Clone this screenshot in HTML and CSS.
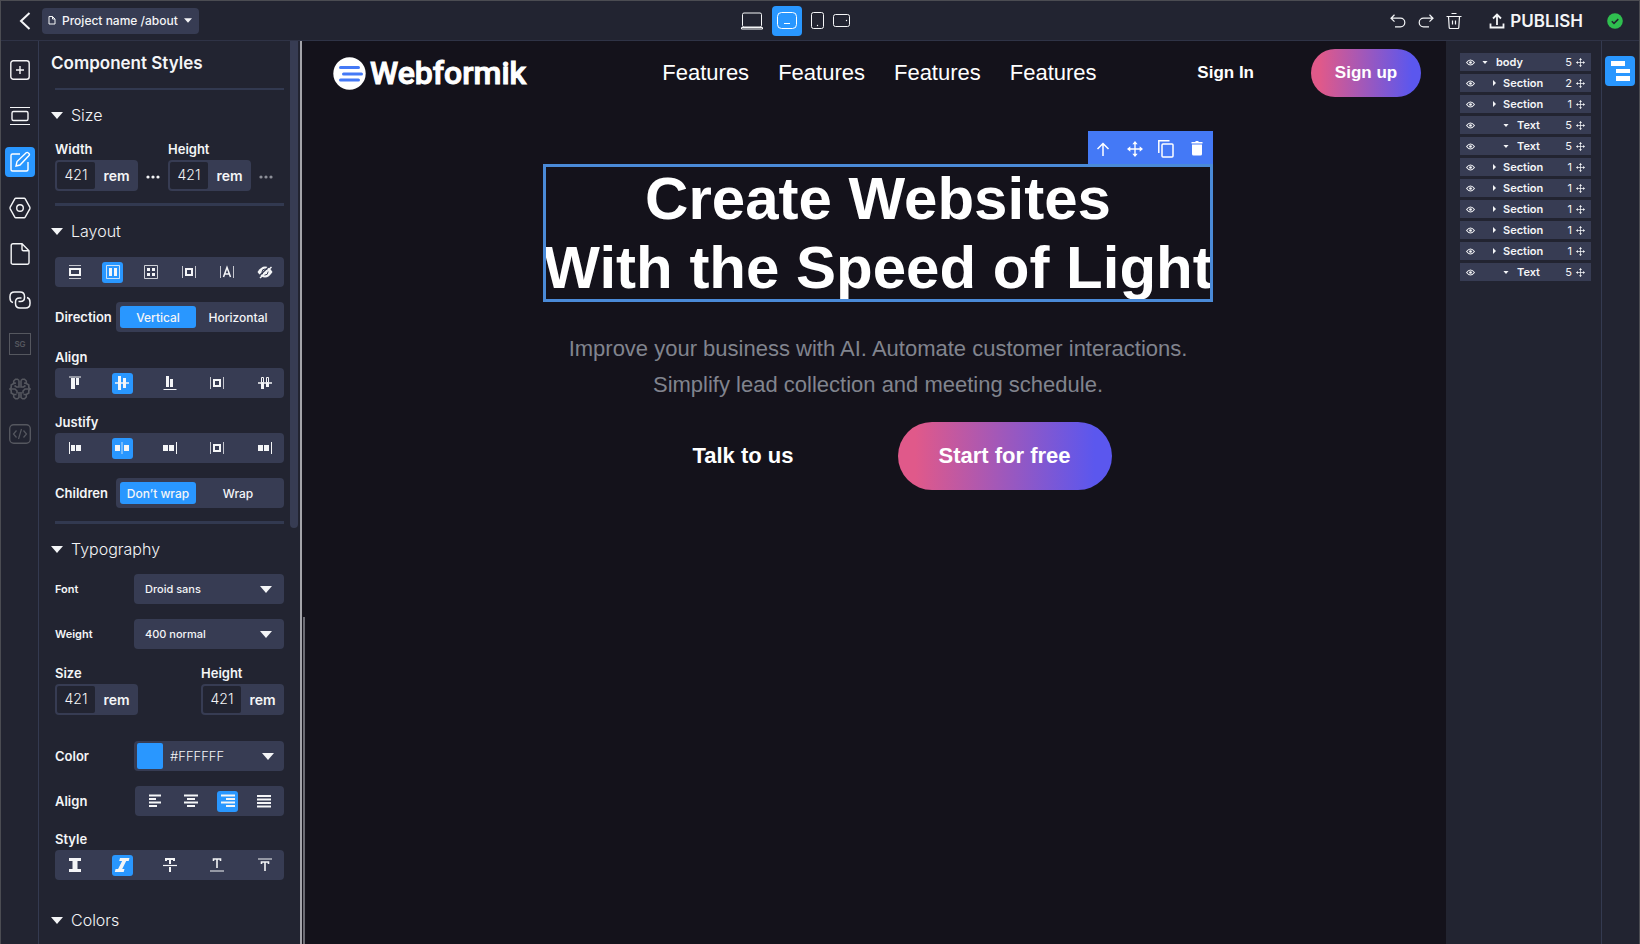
FILE: index.html
```html
<!DOCTYPE html>
<html lang="en">
<head>
<meta charset="utf-8">
<meta name="viewport" content="width=device-width, initial-scale=1">
<title>Webformik editor</title>
<link rel="stylesheet" href="styles.css">
</head>
<body>
<svg class="sprite" aria-hidden="true">
  <symbol id="caret" viewBox="0 0 12 7"><path d="M0 0h12L6 7z" fill="currentColor"/></symbol>
  <symbol id="caret-right" viewBox="0 0 4 8"><path d="M0 0l4 4-4 4z" fill="currentColor"/></symbol>
  <symbol id="eye" viewBox="0 0 8 6"><path d="M.5 3Q4-1.500 7.500 3 4 7.500.5 3z" fill="none" stroke="currentColor" stroke-width=".9"/><circle cx="4" cy="3" r="1.200" fill="currentColor"/></symbol>
  <symbol id="move" viewBox="0 0 24 24"><path d="M12 2v20M2 12h20" fill="none" stroke="currentColor" stroke-width="2"/><path d="M12 0l4 5H8zM12 24l4-5H8zM0 12l5-4v8zM24 12l-5-4v8z" fill="currentColor"/></symbol>
  <symbol id="dots" viewBox="0 0 14 4"><circle cx="2" cy="2" r="1.600" fill="currentColor"/><circle cx="7" cy="2" r="1.600" fill="currentColor"/><circle cx="12" cy="2" r="1.600" fill="currentColor"/></symbol>
  <symbol id="box-between" viewBox="0 0 16 16"><path d="M1.500 2v12M14.500 2v12" stroke="currentColor" opacity=".75"/><path d="M5 5h6v6H5z" fill="none" stroke="currentColor" stroke-width="2"/></symbol>
  <symbol id="half-brain" viewBox="0 0 11 22"><path d="M10 2.500L8.500 1.200H6.500L4.700 3v2.500L2.200 7v2.500L.8 11l1.400 1.500V15l2.500 1.500V19l1.800 1.800h2l1.500-1.300V14M10 2.500V9H7.500L5.500 7.500M1 11h5l2 2v2.500M4.700 16.500H7.500M4.700 5.500L7 5" fill="none" stroke="currentColor" stroke-width="1.600"/></symbol>
</svg>
<div class="app">
  <header class="topbar">
    <div class="topbar-left">
      <button class="plain back" aria-label="Back"><svg width="12" height="18" viewBox="0 0 12 18"><path d="M10.500 1L2 9l8.500 8" fill="none" stroke="currentColor" stroke-width="2"/></svg></button>
      <button class="project">
        <svg width="8" height="9" viewBox="0 0 8 9"><path d="M1 .5h3.500l2.500 2.500v5H1zM4.500.5V3H7" fill="none" stroke="currentColor"/></svg>
        <span>Project name /about</span>
        <svg class="caret-sm" width="8" height="5"><use href="#caret"/></svg>
      </button>
    </div>
    <div class="devices">
      <button class="plain" aria-label="Laptop"><svg width="22" height="18" viewBox="0 0 22 18"><rect x="1.500" y="1" width="19" height="14" rx="1.500" fill="none" stroke="currentColor"/><path d="M.5 15.500h21v1.500h-21z" fill="none" stroke="currentColor"/></svg></button>
      <button class="tool active" aria-label="Tablet landscape"><svg width="20" height="17" viewBox="0 0 20 17"><rect x=".5" y=".5" width="19" height="16" rx="4" fill="none" stroke="currentColor"/><path d="M7 11.500h6" stroke="currentColor"/></svg></button>
      <button class="plain" aria-label="Tablet"><svg width="13" height="17" viewBox="0 0 13 17"><rect x=".5" y=".5" width="12" height="16" rx="2" fill="none" stroke="currentColor"/><circle cx="6.500" cy="13.500" r=".7" fill="currentColor"/></svg></button>
      <button class="plain" aria-label="Phone"><svg width="17" height="13" viewBox="0 0 17 13"><rect x=".5" y=".5" width="16" height="12" rx="2" fill="none" stroke="currentColor"/><circle cx="13.500" cy="6.500" r=".7" fill="currentColor"/></svg></button>
    </div>
    <div class="topbar-right">
      <div class="history">
        <button class="plain" aria-label="Undo"><svg width="16" height="14" viewBox="0 0 16 14"><path d="M4.500.8L1 4.200l3.500 3.500M1 4.200h9.500a4.300 4.300 0 0 1 0 8.600H5" fill="none" stroke="currentColor" stroke-width="1.200"/></svg></button>
        <button class="plain" aria-label="Redo"><svg width="16" height="14" viewBox="0 0 16 14"><path d="M11.500.8L15 4.200l-3.500 3.500M15 4.200H5.500a4.300 4.300 0 0 0 0 8.600H11" fill="none" stroke="currentColor" stroke-width="1.200"/></svg></button>
        <button class="plain" aria-label="Delete"><svg width="16" height="17" viewBox="0 0 16 17"><path d="M.5 4.500h15M2.500 4.500l.7 11q.1 1 1 1h7.600q.9 0 1-1l.7-11M5.500 1.500h5M6.500 8.500v4M9.500 8.500v4" fill="none" stroke="currentColor" stroke-width="1.200"/></svg></button>
      </div>
      <button class="publish"><svg width="16" height="16" viewBox="0 0 16 16"><path d="M8 12V2M4 5.500L8 1.500l4 4M1.500 10.500V14.500h13V10.500" fill="none" stroke="currentColor" stroke-width="1.800"/></svg>PUBLISH</button>
      <svg class="status" width="16" height="16" viewBox="0 0 16 16" role="img" aria-label="Saved"><circle cx="8" cy="8" r="7.800" fill="#2fbf4f"/><path d="M4.800 8.200l2.200 2.200 4.300-4.300" fill="none" stroke="#22252f" stroke-width="1.500"/></svg>
    </div>
  </header>
  <div class="workspace">
    <nav class="rail" aria-label="Tools">
      <div class="rail-main">
        <button class="tool" aria-label="Add"><svg width="20" height="20" viewBox="0 0 20 20"><rect x=".8" y=".8" width="18.400" height="18.400" rx="2.500" fill="none" stroke="currentColor" stroke-width="1.400"/><path d="M10 6v8M6 10h8" stroke="currentColor" stroke-width="1.400"/></svg></button>
        <button class="tool" aria-label="Sections"><svg width="20" height="20" viewBox="0 0 20 20"><path d="M0 1.500h20M0 18.500h20" stroke="currentColor" stroke-width="1.200"/><rect x="2" y="5.500" width="16" height="9" rx="1.500" fill="none" stroke="currentColor" stroke-width="1.400"/></svg></button>
        <button class="tool active" aria-label="Styles"><svg width="22" height="22" viewBox="0 0 22 22"><path d="M11 3H3.500q-1.500 0-1.500 1.500v14q0 1.500 1.500 1.500h14q1.500 0 1.500-1.500V11" fill="none" stroke="currentColor" stroke-width="1.400"/><path d="M7 15l1-4.500L17.200 1.800q1-.9 2.100.1l.6.6q1 1 .1 2L11 14z" fill="none" stroke="currentColor" stroke-width="1.400"/></svg></button>
        <button class="tool" aria-label="Settings"><svg width="22" height="22" viewBox="0 0 22 22"><path d="M6.800 1.200h8.400q.6 0 1 .7l4.600 8.200q.4.900 0 1.800l-4.600 8.200q-.4.700-1 .7H6.800q-.6 0-1-.7L1.200 11.900q-.4-.9 0-1.800l4.600-8.200q.4-.7 1-.7z" fill="none" stroke="currentColor" stroke-width="1.400"/><circle cx="11" cy="11" r="3.300" fill="none" stroke="currentColor" stroke-width="1.400"/></svg></button>
        <button class="tool" aria-label="Pages"><svg width="20" height="22" viewBox="0 0 20 22"><path d="M3 .8h9l7 7v12q0 1.400-1.500 1.400H3Q1.200 21.200 1.200 19.700V2.500Q1.200.8 3 .8zM12 .8v5.500q0 1.500 1.500 1.500H19" fill="none" stroke="currentColor" stroke-width="1.400"/></svg></button>
        <button class="tool" aria-label="Links"><svg width="22" height="18" viewBox="0 0 22 18"><path d="M4 11.500Q1 10.700 1 7V5.500Q1 1 5.500 1H11q4.500 0 4.500 4.500v1q0 4-4 4H9.500M18 6.500q3 .8 3 4.500v1.500q0 4.500-4.500 4.500H11q-4.500 0-4.500-4.500v-1.500q0-4 4-4h2" fill="none" stroke="currentColor" stroke-width="1.500"/></svg></button>
      </div>
      <div class="rail-extra">
        <button class="tool" disabled><svg width="22" height="22" viewBox="0 0 22 22"><rect x=".5" y=".5" width="21" height="21" fill="none" stroke="currentColor"/><text x="11" y="14" class="sg">SG</text></svg></button>
        <button class="tool" disabled aria-label="AI"><svg width="22" height="22" viewBox="0 0 22 22"><use href="#half-brain" width="11" height="22"/><use href="#half-brain" width="11" height="22" transform="matrix(-1 0 0 1 22 0)"/></svg></button>
        <button class="tool" disabled aria-label="Code"><svg width="22" height="20" viewBox="0 0 22 20"><rect x=".7" y=".7" width="20.600" height="18.600" rx="4" fill="none" stroke="currentColor" stroke-width="1.400"/><path d="M7.500 6.500L4.500 10l3 3.500M14.500 6.500l3 3.500-3 3.500M12.500 5l-3 10" fill="none" stroke="currentColor" stroke-width="1.200"/></svg></button>
      </div>
    </nav>
    <aside class="panel">
      <div class="panel-body">
        <h2 class="panel-title">Component Styles</h2>
        <hr class="rule thin">
        <section class="group">
          <h3 class="group-title"><svg width="12" height="7"><use href="#caret"/></svg>Size</h3>
          <div class="dims">
            <div class="dim"><label class="label" for="w">Width</label><div class="unit"><input id="w" value="421"><button>rem</button></div></div>
            <button class="plain more" aria-label="Width options"><svg width="14" height="4"><use href="#dots"/></svg></button>
            <div class="dim"><label class="label" for="h">Height</label><div class="unit"><input id="h" value="421"><button>rem</button></div></div>
            <button class="plain more dim-more" aria-label="Height options"><svg width="14" height="4"><use href="#dots"/></svg></button>
          </div>
        </section>
        <hr class="rule">
        <section class="group">
          <h3 class="group-title"><svg width="12" height="7"><use href="#caret"/></svg>Layout</h3>
          <div class="bar">
            <button aria-label="Block"><svg width="16" height="16" viewBox="0 0 16 16"><path d="M2 1.500h12M2 14.500h12" stroke="currentColor" opacity=".75"/><path d="M3 5h10v6H3z" fill="none" stroke="currentColor" stroke-width="2"/></svg></button>
            <button class="active" aria-label="Flex"><svg width="16" height="16" viewBox="0 0 16 16"><path d="M1.500 1.500h13v13h-13z" fill="none" stroke="currentColor" opacity=".8"/><path d="M4 4h3v8H4zM9 4h3v8H9z" fill="currentColor"/></svg></button>
            <button aria-label="Grid"><svg width="16" height="16" viewBox="0 0 16 16"><path d="M1.500 1.500h13v13h-13z" fill="none" stroke="currentColor" opacity=".8"/><path d="M4 4h3v3H4zM9 4h3v3H9zM4 9h3v3H4zM9 9h3v3H9z" fill="currentColor"/></svg></button>
            <button aria-label="Inline block"><svg width="16" height="16"><use href="#box-between"/></svg></button>
            <button aria-label="Inline"><svg width="16" height="16" viewBox="0 0 16 16"><path d="M1.500 2v12M14.500 2v12" stroke="currentColor" opacity=".75"/><path d="M4.500 13L8 3.500 11.500 13M5.500 10h5" fill="none" stroke="currentColor" stroke-width="1.500"/></svg></button>
            <button aria-label="Hidden"><svg width="16" height="16" viewBox="0 0 16 16"><path d="M.5 8Q4 2.500 8 2.500T15.500 8Q12 13.500 8 13.500T.5 8z" fill="currentColor"/><circle cx="8" cy="8" r="3" fill="none" stroke="#373c53"/><path d="M1.500 12.500L13 1.500" stroke="#373c53" stroke-width="1.500"/><path d="M3 14L14.500 3" stroke="currentColor" stroke-width="1.500"/></svg></button>
          </div>
          <div class="row">
            <span class="label">Direction</span>
            <div class="segmented"><button class="active">Vertical</button><button>Horizontal</button></div>
          </div>
          <div class="stack">
            <span class="label">Align</span>
            <div class="bar">
              <button aria-label="Top"><svg width="16" height="16" viewBox="0 0 16 16"><path d="M2 2h12" stroke="currentColor"/><path d="M4 3h4v11H4zM9 3h3v7H9z" fill="currentColor"/></svg></button>
              <button class="active" aria-label="Middle"><svg width="16" height="16" viewBox="0 0 16 16"><path d="M1 8h14" stroke="currentColor" stroke-width="1.500"/><path d="M4 1h3v14H4zM9 3h3v10H9z" fill="currentColor"/></svg></button>
              <button aria-label="Bottom"><svg width="16" height="16" viewBox="0 0 16 16"><path d="M1.500 14.500h13" stroke="currentColor"/><path d="M4 1h3v11H4zM8 4h3v8H8z" fill="currentColor"/></svg></button>
              <button aria-label="Stretch"><svg width="16" height="16"><use href="#box-between"/></svg></button>
              <button aria-label="Baseline"><svg width="16" height="16" viewBox="0 0 16 16"><path d="M1 8h14" stroke="currentColor" stroke-width="1.500"/><path d="M4.500 2.500h2v5h-2zM9.500 2.500h2v5h-2z" fill="none" stroke="currentColor"/><path d="M4 8h3v6H4zM9 8h3v4H9z" fill="currentColor"/></svg></button>
            </div>
          </div>
          <div class="stack">
            <span class="label">Justify</span>
            <div class="bar">
              <button aria-label="Start"><svg width="16" height="16" viewBox="0 0 16 16"><path d="M2.500 2v12" stroke="currentColor"/><path d="M4 5h4v6H4zM9 5h5v6H9z" fill="currentColor"/></svg></button>
              <button class="active" aria-label="Center"><svg width="16" height="16" viewBox="0 0 16 16"><path d="M8 2v12" stroke="currentColor" opacity=".75"/><path d="M1 5h5v6H1zM10 5h5v6h-5z" fill="currentColor"/></svg></button>
              <button aria-label="End"><svg width="16" height="16" viewBox="0 0 16 16"><path d="M14.500 2v12" stroke="currentColor"/><path d="M1 5h5v6H1zM7 5h5v6H7z" fill="currentColor"/></svg></button>
              <button aria-label="Space around"><svg width="16" height="16"><use href="#box-between"/></svg></button>
              <button aria-label="Space between"><svg width="16" height="16" viewBox="0 0 16 16"><path d="M14.500 2v12" stroke="currentColor"/><path d="M1 5h5v6H1zM7 5h5v6H7z" fill="currentColor"/></svg></button>
            </div>
          </div>
          <div class="row last-row">
            <span class="label">Children</span>
            <div class="segmented"><button class="active">Don’t wrap</button><button>Wrap</button></div>
          </div>
        </section>
        <hr class="rule">
        <section class="group">
          <h3 class="group-title"><svg width="12" height="7"><use href="#caret"/></svg>Typography</h3>
          <div class="selects">
            <div class="field"><label class="label small" for="font">Font</label><div class="select"><select id="font"><option>Droid sans</option></select><svg width="12" height="7"><use href="#caret"/></svg></div></div>
            <div class="field"><label class="label small" for="weight">Weight</label><div class="select"><select id="weight"><option>400 normal</option></select><svg width="12" height="7"><use href="#caret"/></svg></div></div>
          </div>
          <div class="dims spread">
            <div class="dim"><label class="label" for="fs">Size</label><div class="unit"><input id="fs" value="421"><button>rem</button></div></div>
            <div class="dim"><label class="label" for="fh">Height</label><div class="unit"><input id="fh" value="421"><button>rem</button></div></div>
          </div>
          <div class="row"><label class="label" for="color">Color</label><div class="select color"><span class="swatch"></span><select id="color"><option>#FFFFFF</option></select><svg width="12" height="7"><use href="#caret"/></svg></div></div>
          <div class="row last-row"><span class="label">Align</span>
            <div class="bar text-align">
              <button aria-label="Left"><svg width="16" height="16" viewBox="0 0 16 16"><path d="M2 2.500h12M2 6h7M2 9.500h12M2 13h8" stroke="currentColor" stroke-width="2"/></svg></button>
              <button aria-label="Center"><svg width="16" height="16" viewBox="0 0 16 16"><path d="M1 2.500h14M4 6h8M1 9.500h14M4 13h8" stroke="currentColor" stroke-width="2"/></svg></button>
              <button class="active" aria-label="Right"><svg width="16" height="16" viewBox="0 0 16 16"><path d="M1 2.500h14M6 6h9M1 9.500h14M6 13h9" stroke="currentColor" stroke-width="2"/></svg></button>
              <button aria-label="Justify"><svg width="16" height="16" viewBox="0 0 16 16"><path d="M1 3h14M1 6.500h14M1 10h14M1 13.500h14" stroke="currentColor" stroke-width="2"/></svg></button>
            </div>
          </div>
          <div class="stack">
            <span class="label">Style</span>
            <div class="bar">
              <button aria-label="Bold"><svg width="16" height="16" viewBox="0 0 16 16"><path d="M2 1h12v3h-3.500v8H14v3H2v-3h3.500V4H2z" fill="currentColor"/></svg></button>
              <button class="active" aria-label="Italic"><svg width="16" height="16" viewBox="0 0 16 16"><path d="M6 1h9.500l-.8 3h-2.500l-4 8h2.300l-.8 3H.8l.8-3h2.500l4-8H5.200z" fill="currentColor"/></svg></button>
              <button aria-label="Strikethrough"><svg width="16" height="16" viewBox="0 0 16 16"><path d="M1 8.500h14" stroke="currentColor" stroke-width="1.200"/><path d="M4 4V2h8v2M8 2v5M8 10v5" fill="none" stroke="currentColor" stroke-width="2"/></svg></button>
              <button aria-label="Underline"><svg width="16" height="16" viewBox="0 0 16 16"><path d="M1 14h14" stroke="currentColor"/><path d="M4.500 4V2h7v2M8 2v9" fill="none" stroke="currentColor" stroke-width="1.600"/></svg></button>
              <button aria-label="Overline"><svg width="16" height="16" viewBox="0 0 16 16"><path d="M1 2h14" stroke="currentColor"/><path d="M4.500 7V5h7v2M8 5v9" fill="none" stroke="currentColor" stroke-width="1.600"/></svg></button>
            </div>
          </div>
        </section>
        <section class="group">
          <h3 class="group-title bottom"><svg width="12" height="7"><use href="#caret"/></svg>Colors</h3>
        </section>
      </div>
      <div class="scrollbar"></div>
    </aside>
    <main class="canvas">
      <div class="canvas-track"></div>
      <div class="site">
        <header class="site-nav">
          <a class="brand" href="#"><svg width="33" height="33" viewBox="0 0 33 33"><circle cx="16.500" cy="16.500" r="16.200" fill="#fff"/><path d="M7.500 10.500h18M10.500 17h18M7.500 23h18" stroke="#4479f6" stroke-width="3" stroke-linecap="round"/></svg><span>Webformik</span></a>
          <nav class="links"><a href="#">Features</a><a href="#">Features</a><a href="#">Features</a><a href="#">Features</a></nav>
          <div class="auth"><a href="#">Sign In</a><button class="pill">Sign up</button></div>
        </header>
        <section class="hero">
          <div class="selected">
            <div class="edit-tools">
              <button aria-label="Select parent"><svg width="14" height="14" viewBox="0 0 14 14"><path d="M7 14V2M1.500 7L7 1.500 12.500 7" fill="none" stroke="currentColor" stroke-width="1.500"/></svg></button>
              <button aria-label="Move"><svg width="16" height="16"><use href="#move"/></svg></button>
              <button aria-label="Duplicate"><svg width="16" height="18" viewBox="0 0 16 18"><path d="M.8 13V.8H11.500" fill="none" stroke="currentColor" stroke-width="1.500"/><rect x="4" y="4" width="11" height="13" rx="1" fill="none" stroke="currentColor" stroke-width="1.500"/></svg></button>
              <button aria-label="Remove"><svg width="12" height="15" viewBox="0 0 12 15"><path d="M.5 1h3.500l1-1h2l1 1h3.500v1.500H.5zM1 3.500h10V13q0 1.500-1.500 1.500h-7Q1 14.500 1 13z" fill="currentColor"/></svg></button>
            </div>
            <h1>Create Websites<br>With the Speed of Light</h1>
          </div>
          <p class="lead">Improve your business with AI. Automate customer interactions.<br>Simplify lead collection and meeting schedule.</p>
          <div class="cta"><a href="#">Talk to us</a><button class="pill">Start for free</button></div>
        </section>
      </div>
    </main>
    <aside class="tree" aria-label="Layers">
      <ul>
        <li class="d0"><svg class="eye" width="9" height="7"><use href="#eye"/></svg><svg class="tw" width="6" height="3"><use href="#caret"/></svg><span class="name">body</span><span class="count">5</span><svg class="mv" width="9" height="9"><use href="#move"/></svg></li>
        <li class="d1"><svg class="eye" width="9" height="7"><use href="#eye"/></svg><svg class="tw" width="3" height="6"><use href="#caret-right"/></svg><span class="name">Section</span><span class="count">2</span><svg class="mv" width="9" height="9"><use href="#move"/></svg></li>
        <li class="d1"><svg class="eye" width="9" height="7"><use href="#eye"/></svg><svg class="tw" width="3" height="6"><use href="#caret-right"/></svg><span class="name">Section</span><span class="count">1</span><svg class="mv" width="9" height="9"><use href="#move"/></svg></li>
        <li class="d2"><svg class="eye" width="9" height="7"><use href="#eye"/></svg><svg class="tw" width="6" height="3"><use href="#caret"/></svg><span class="name">Text</span><span class="count">5</span><svg class="mv" width="9" height="9"><use href="#move"/></svg></li>
        <li class="d2"><svg class="eye" width="9" height="7"><use href="#eye"/></svg><svg class="tw" width="6" height="3"><use href="#caret"/></svg><span class="name">Text</span><span class="count">5</span><svg class="mv" width="9" height="9"><use href="#move"/></svg></li>
        <li class="d1"><svg class="eye" width="9" height="7"><use href="#eye"/></svg><svg class="tw" width="3" height="6"><use href="#caret-right"/></svg><span class="name">Section</span><span class="count">1</span><svg class="mv" width="9" height="9"><use href="#move"/></svg></li>
        <li class="d1"><svg class="eye" width="9" height="7"><use href="#eye"/></svg><svg class="tw" width="3" height="6"><use href="#caret-right"/></svg><span class="name">Section</span><span class="count">1</span><svg class="mv" width="9" height="9"><use href="#move"/></svg></li>
        <li class="d1"><svg class="eye" width="9" height="7"><use href="#eye"/></svg><svg class="tw" width="3" height="6"><use href="#caret-right"/></svg><span class="name">Section</span><span class="count">1</span><svg class="mv" width="9" height="9"><use href="#move"/></svg></li>
        <li class="d1"><svg class="eye" width="9" height="7"><use href="#eye"/></svg><svg class="tw" width="3" height="6"><use href="#caret-right"/></svg><span class="name">Section</span><span class="count">1</span><svg class="mv" width="9" height="9"><use href="#move"/></svg></li>
        <li class="d1"><svg class="eye" width="9" height="7"><use href="#eye"/></svg><svg class="tw" width="3" height="6"><use href="#caret-right"/></svg><span class="name">Section</span><span class="count">1</span><svg class="mv" width="9" height="9"><use href="#move"/></svg></li>
        <li class="d2"><svg class="eye" width="9" height="7"><use href="#eye"/></svg><svg class="tw" width="6" height="3"><use href="#caret"/></svg><span class="name">Text</span><span class="count">5</span><svg class="mv" width="9" height="9"><use href="#move"/></svg></li>
      </ul>
    </aside>
    <div class="rail-right">
      <button class="tool active" aria-label="Layers"><svg width="20" height="20" viewBox="0 0 20 20"><path d="M1 0h14v5H1zM6 8h14v4H6zM6 15h14v5H6z" fill="currentColor"/></svg></button>
    </div>
  </div>
</div>
</body>
</html>
```
FILE: styles.css
```css
* { box-sizing: border-box; }

body {
  margin: 0;
  background: #222431;
  color: #f4f5f7;
  font-family: Inter, "Liberation Sans", sans-serif;
  font-size: 14px;
}

button, input, select { font: inherit; color: inherit; border: 0; margin: 0; padding: 0; background: none; }
a { color: inherit; text-decoration: none; }
svg { display: block; flex: none; }
.sprite { display: none; }

.app {
  display: flex;
  flex-direction: column;
  height: 100vh;
  border: 1px solid #4b4c52;
  border-bottom: 0;
  overflow: hidden;
}

/* Top bar */
.topbar {
  display: flex;
  align-items: center;
  justify-content: space-between;
  height: 40px;
  flex: none;
  padding: 0 16px 0 18px;
  border-bottom: 1px solid #2f3346;
}
.topbar-left, .topbar-right, .devices, .history { display: flex; align-items: center; }
.topbar-left { gap: 11px; }
.project {
  display: flex;
  align-items: center;
  gap: 6px;
  height: 26px;
  padding: 0 7px 0 6px;
  border-radius: 4px;
  background: #373c53;
  font-size: 12px;
  font-weight: 500;
}
.devices { gap: 9px; padding-left: 2px; }
.history { gap: 12px; }
.publish { display: flex; align-items: center; gap: 5px; margin: 0 24px 0 27px; font-size: 17px; font-weight: 600; }

.tool {
  display: flex;
  align-items: center;
  justify-content: center;
  width: 30px;
  height: 30px;
  flex: none;
  border-radius: 4px;
}
.tool.active { background: #2997ff; color: #fff; }
.tool:disabled { color: #55575f; }

/* Workspace columns */
.workspace { display: flex; flex: 1; min-height: 0; }
.rail { width: 38px; flex: none; padding: 14px 3px 0 4px; border-right: 1px solid #343a50; }
.rail-main, .rail-extra { display: flex; flex-direction: column; gap: 16px; }
.rail-extra { gap: 15px; margin-top: 14px; }
.sg { font-size: 8px; font-weight: 600; fill: currentColor; text-anchor: middle; }

.panel {
  display: flex;
  width: 263px;
  flex: none;
  border-right: 2px solid #a4a4aa;
}
.panel-body { flex: 1; min-width: 0; padding: 10px 6px 0 16px; }
.scrollbar { width: 8px; height: 487px; margin-right: 2px; border-radius: 0 0 4px 4px; background: #373c53; }
.panel-title { margin: 0 0 13px -4px; font-size: 17px; font-weight: 600; line-height: 24px; }
.rule { height: 3px; margin: 0; border: 0; background: #323950; }
.rule.thin { height: 2px; }
.group-title {
  display: flex;
  align-items: center;
  gap: 8px;
  height: 24px;
  margin: 13px 0 14px -4px;
  font-size: 16px;
  font-weight: 300;
}
.group-title.bottom { margin-top: 28px; }
.label { font-size: 13px; font-weight: 600; line-height: 20px; }
.label.small { font-size: 11px; }

.dims { display: flex; align-items: flex-end; margin: -2px 0 12px; }
.dims.spread { justify-content: space-between; margin: 14px 0 26px; }
.dim { display: flex; flex-direction: column; gap: 1px; }
.unit { display: flex; width: 83px; height: 31px; border-radius: 4px; background: #373c53; }
.unit input {
  width: 38px;
  height: 27px;
  margin: 2px 0 2px 2px;
  padding-bottom: 3px;
  border-radius: 2px;
  background: #222431;
  font-size: 14px;
  font-weight: 300;
  text-align: center;
}
.unit button { flex: 1; font-size: 14px; font-weight: 600; }
.more { width: 30px; height: 28px; display: flex; align-items: center; justify-content: center; }
.dim-more { color: #8d8f98; }

.bar {
  display: flex;
  align-items: center;
  justify-content: space-between;
  height: 30px;
  padding: 0 9px;
  border-radius: 4px;
  background: #373c53;
}
.bar button {
  display: flex;
  align-items: center;
  justify-content: center;
  width: 21px;
  height: 21px;
  border-radius: 3px;
}
.bar .active, .segmented .active { background: #2997ff; }
.row, .field { display: flex; align-items: center; justify-content: space-between; }
.row { margin: 15px 0; }
.last-row { margin-bottom: 13px; }
.selects { display: flex; flex-direction: column; gap: 15px; margin-top: -1px; }
.segmented {
  display: flex;
  width: 168px;
  height: 30px;
  padding: 4px;
  border-radius: 4px;
  background: #373c53;
  font-size: 12px;
  font-weight: 500;
}
.segmented button { flex: 1; border-radius: 3px; }
.segmented .active { flex: none; width: 76px; }
.stack { display: flex; flex-direction: column; gap: 1px; margin-bottom: 14px; }
.select { display: grid; align-items: center; width: 150px; height: 30px; border-radius: 4px; background: #373c53; }
.select select {
  grid-area: 1 / 1;
  width: 100%;
  height: 100%;
  padding-left: 11px;
  appearance: none;
  font-size: 11px;
  font-weight: 500;
}
.select svg { grid-area: 1 / 1; justify-self: end; margin-right: 12px; pointer-events: none; }
.select.color select { padding-left: 36px; font-size: 13px; font-weight: 300; }
.select.color svg { margin-right: 10px; }
.swatch { grid-area: 1 / 1; width: 26px; height: 26px; margin-left: 3px; border-radius: 2px; background: #2997ff; }
.bar.text-align { width: 149px; }

/* Edited page */
.canvas { display: flex; flex: 1; min-width: 0; background: #14121b; font-family: "Liberation Sans", Arial, sans-serif; color: #fff; }
.canvas-track { align-self: flex-end; width: 2px; height: 327px; margin: 0 5px 0 1px; background: #6c6c74; }
.site { flex: 1; min-width: 0; }
.site-nav { display: flex; align-items: center; padding: 8px 25px 0 23px; }
.brand { display: flex; align-items: center; gap: 4px; font-family: Roboto, sans-serif; font-size: 32px; font-weight: 500; }
.brand span { -webkit-text-stroke: 1px #fff; stroke-linejoin: round; }
.links { display: flex; gap: 29px; margin-left: 136px; font-size: 22px; }
.auth { display: flex; align-items: center; gap: 57px; margin-left: auto; font-size: 17px; font-weight: 700; }
.pill { border-radius: 40px; background: linear-gradient(90deg, #e0598a 8%, #5b57ee 92%); font-weight: 700; }
.auth .pill { width: 110px; height: 48px; }
.hero { display: flex; flex-direction: column; align-items: center; padding-top: 34px; }
.selected { display: flex; flex-direction: column; }
.edit-tools {
  display: flex;
  align-self: flex-end;
  width: 125px;
  height: 33px;
  background: #4479f6;
}
.edit-tools button { display: flex; flex: 1; align-items: center; justify-content: center; padding-top: 2px; }
h1 {
  margin: 0;
  outline: 3px solid #4a8ad8;
  outline-offset: -3px;
  font-size: 60px;
  line-height: 69px;
  text-align: center;
  white-space: nowrap;
}
.lead { margin: 29px 0 19px; color: #81848e; font-size: 22px; line-height: 36px; text-align: center; }
.cta { display: flex; align-items: center; gap: 56px; font-size: 22px; font-weight: 700; }
.cta a { padding: 0 48px; }
.cta .pill { width: 214px; height: 68px; }

/* Layer tree */
.tree { width: 155px; flex: none; padding: 12px 10px 0 14px; }
.tree ul { display: flex; flex-direction: column; gap: 3px; margin: 0; padding: 0; list-style: none; }
.tree li { display: flex; align-items: center; height: 18px; padding: 0 6px; background: #373c53; font-size: 11px; }
.tw { margin: 0 8px 0 7px; }
.d1 .tw { margin: 0 7px 0 18px; }
.d2 .tw { margin-left: 28px; }
.name { flex: 1; font-weight: 600; }
.count { margin-right: 4px; }
.rail-right { width: 38px; flex: none; padding: 15px 4px 0 3px; border-left: 1px solid #343a50; }
```
